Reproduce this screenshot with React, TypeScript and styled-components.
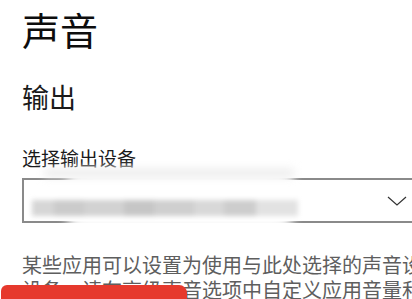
import React from "react";
import styled, { createGlobalStyle } from "styled-components";

const Global = createGlobalStyle`
  html, body {
    margin: 0;
    padding: 0;
    background: #ffffff;
    overflow: hidden;
  }
  body {
    width: 412px;
    height: 299px;
    font-family: "Noto Sans CJK SC", "Noto Sans", sans-serif;
  }
`;

const Page = styled.div`
  position: relative;
  width: 412px;
  height: 299px;
  overflow: hidden;
  padding-left: 22px;
  box-sizing: border-box;
  display: flex;
  flex-direction: column;
`;

const Title = styled.h1`
  margin: 0;
  padding-top: 3px;
  font-size: 38px;
  line-height: 52px;
  font-weight: 400;
  color: #0d0d0d;
`;

const Section = styled.h2`
  margin: 24px 0 0;
  font-size: 27px;
  line-height: 36px;
  font-weight: 400;
  color: #1a1a1a;
`;

const Label = styled.div`
  margin-top: 30px;
  font-size: 19px;
  line-height: 26px;
  color: #1a1a1a;
`;

const SelectBox = styled.div`
  position: relative;
  margin-top: 7px;
  width: 398px;
  height: 45px;
  flex-shrink: 0;
  box-sizing: border-box;
  border: 2px solid #8a8a8a;
  display: flex;
  align-items: center;
  padding: 0 11px 0 8px;
`;

const Smear = styled.div`
  position: absolute;
  left: 40px;
  top: -10px;
  width: 232px;
  height: 60px;
  background: #fff;
  filter: blur(5px);
  border-radius: 20px;
`;

const Haze = styled.div`
  position: absolute;
  left: 20px;
  top: -11px;
  width: 250px;
  height: 8px;
  background: #ececec;
  filter: blur(4px);
`;

const BlurBar = styled.div`
  position: relative;
  margin-top: 14px;
  width: 266px;
  height: 16px;
  display: flex;
  filter: blur(2.5px);
`;

const BlurSeg = styled.div<{ $w: number; $c: string }>`
  width: ${(p) => p.$w}px;
  height: 100%;
  background: ${(p) => p.$c};
`;

const Chevron = styled.svg`
  margin-left: auto;
  width: 20px;
  height: 10px;
  position: relative;
`;

const Description = styled.p`
  margin: 29px 0 0;
  width: 530px;
  font-size: 20px;
  line-height: 25px;
  color: #5e5e5e;
`;

const RedTab = styled.div`
  position: absolute;
  left: 1px;
  top: 285px;
  width: 186px;
  height: 30px;
  background: #e6392d;
  border-radius: 6px 8px 0 0;
`;

const segs: Array<[number, string]> = [
  [22, "#d6d6d6"],
  [30, "#cbcbcb"],
  [40, "#d2d2d2"],
  [30, "#c6c6c6"],
  [40, "#cfcfcf"],
  [30, "#d8d8d8"],
  [32, "#cdcdcd"],
  [42, "#e2e2e2"],
];

export default function App() {
  return (
    <>
      <Global />
      <Page>
        <Title>声音</Title>
        <Section>输出</Section>
        <Label>选择输出设备</Label>
        <SelectBox>
          <Smear />
          <Haze />
          <BlurBar>
            {segs.map(([w, c], i) => (
              <BlurSeg key={i} $w={w} $c={c} />
            ))}
          </BlurBar>
          <Chevron viewBox="0 0 20 10">
            <path d="M1 1 L10 9 L19 1" fill="none" stroke="#333" strokeWidth="1.2" />
          </Chevron>
        </SelectBox>
        <Description>
          某些应用可以设置为使用与此处选择的声音设备不同的声音设备。请在高级声音选项中自定义应用音量和设备。
        </Description>
        <RedTab />
      </Page>
    </>
  );
}
